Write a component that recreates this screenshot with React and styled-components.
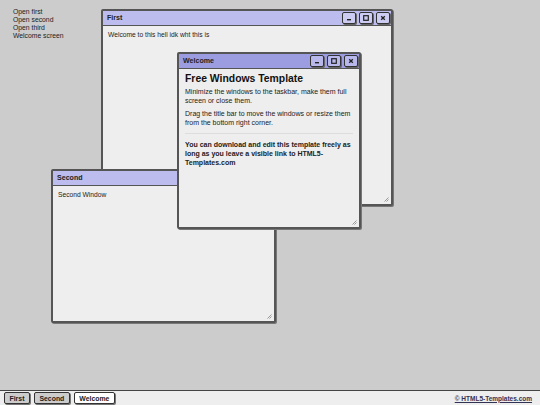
import React from "react";
import styled, { createGlobalStyle } from "styled-components";

const Global = createGlobalStyle`
  html, body { margin: 0; padding: 0; height: 100%; }
  body { background: #cccccc; font-family: "Liberation Sans", Arial, sans-serif; color: #222; }
  #root { height: 100%; }
`;

const Screen = styled.div`
  height: 100vh;
  display: flex;
  flex-direction: column;
  overflow: hidden;
`;

const Desktop = styled.div`
  position: relative;
  flex: 1;
`;

const Nav = styled.ul`
  list-style: none;
  margin: 0;
  padding: 8px 0 0 13px;
  font-size: 6.8px;
  line-height: 8px;
  color: #222;
`;

const NavItem = styled.li`
  cursor: pointer;
`;

const Win = styled.div`
  position: absolute;
  box-sizing: border-box;
  display: flex;
  flex-direction: column;
  background: #eeeeee;
  border: 2px solid #555;
  border-radius: 2px;
  box-shadow: 1px 1px 0 #777;
`;

const TitleBar = styled.div`
  display: flex;
  align-items: center;
  justify-content: space-between;
  height: 14px;
  padding: 0 1px 0 4px;
  background: ${(p) => (p.$active ? "#9c9ce0" : "#bcbcee")};
  border-bottom: 1px solid #555;
`;

const Title = styled.span`
  font-size: 7.1px;
  font-weight: bold;
  color: #222;
  margin-top: -1px;
`;

const Controls = styled.div`
  display: flex;
  gap: 3px;
`;

const CtrlBtn = styled.div`
  box-sizing: border-box;
  width: 14px;
  height: 12px;
  border: 1px solid #333;
  border-radius: 2px;
  background: ${(p) => (p.$active ? "#b8b8ec" : "#ccccf2")};
  display: flex;
  align-items: center;
  justify-content: center;
  box-shadow: 1px 1px 0 #666;
`;

const Body = styled.div`
  position: relative;
  flex: 1;
  padding: ${(p) => (p.$tight ? "3px 6px" : "4px 5px")};
  font-size: ${(p) => (p.$tight ? "7px" : "6.7px")};
  line-height: 9px;
`;

const Heading = styled.h2`
  margin: 0 0 1px;
  font-size: 10.4px;
  line-height: 14px;
  font-weight: bold;
  color: #111;
`;

const Para = styled.p`
  margin: 0 0 4px;
  font-weight: ${(p) => (p.$bold ? "bold" : "normal")};
`;

const Rule = styled.hr`
  border: 0;
  border-top: 1px solid #ddd;
  margin: 6px 0 6px;
`;

const Grip = styled.svg`
  position: absolute;
  right: 2px;
  bottom: 2px;
  width: 5px;
  height: 5px;
`;

const Taskbar = styled.div`
  height: 14px;
  border-top: 1px solid #444;
  background: #eeeeee;
  display: flex;
  align-items: center;
  padding: 0 4px;
  gap: 4px;
`;

const TaskBtn = styled.div`
  box-sizing: border-box;
  height: 12px;
  padding: 0 4.5px;
  border: 1px solid #333;
  border-radius: 2px;
  background: ${(p) => (p.$active ? "#ffffff" : "#cccccc")};
  box-shadow: 1px 1px 0 #777;
  font-size: 6.9px;
  font-weight: bold;
  display: flex;
  align-items: center;
`;

const Credit = styled.a`
  margin-left: auto;
  margin-right: 4px;
  font-size: 6.5px;
  font-weight: bold;
  color: #335;
  text-decoration: underline;
`;

const MinIcon = () => (
  <svg width="6" height="6" viewBox="0 0 6 6"><rect x="1" y="4" width="4" height="1.4" fill="#222" /></svg>
);
const MaxIcon = () => (
  <svg width="6" height="6" viewBox="0 0 6 6"><rect x="0.7" y="0.7" width="4.6" height="4.6" fill="none" stroke="#222" strokeWidth="1.2" /></svg>
);
const CloseIcon = () => (
  <svg width="6" height="6" viewBox="0 0 6 6"><path d="M1.2 1.2 L4.8 4.8 M4.8 1.2 L1.2 4.8" stroke="#222" strokeWidth="1.3" /></svg>
);

const ResizeGrip = () => (
  <Grip viewBox="0 0 5 5">
    <path d="M4.5 0.5 L0.5 4.5 M4.5 2.5 L2.5 4.5" stroke="#999" strokeWidth="1" />
  </Grip>
);

const Window = ({ title, active, tight, style, children }) => (
  <Win style={style}>
    <TitleBar $active={active}>
      <Title>{title}</Title>
      <Controls>
        <CtrlBtn $active={active}><MinIcon /></CtrlBtn>
        <CtrlBtn $active={active}><MaxIcon /></CtrlBtn>
        <CtrlBtn $active={active}><CloseIcon /></CtrlBtn>
      </Controls>
    </TitleBar>
    <Body $tight={tight}>
      {children}
      <ResizeGrip />
    </Body>
  </Win>
);

export default function App() {
  return (
    <Screen>
      <Global />
      <Desktop>
        <Nav>
          <NavItem>Open first</NavItem>
          <NavItem>Open second</NavItem>
          <NavItem>Open third</NavItem>
          <NavItem>Welcome screen</NavItem>
        </Nav>
        <Window title="First" style={{ left: 101, top: 9, width: 292, height: 197 }}>
          Welcome to this hell idk wht this is
        </Window>
        <Window title="Welcome" active tight style={{ left: 177, top: 52, width: 184, height: 177, zIndex: 3 }}>
          <Heading>Free Windows Template</Heading>
          <Para>Minimize the windows to the taskbar, make them full screen or close them.</Para>
          <Para>Drag the title bar to move the windows or resize them from the bottom right corner.</Para>
          <Rule />
          <Para $bold>You can download and edit this template freely as long as you leave a visible link to HTML5-Templates.com</Para>
        </Window>
        <Window title="Second" style={{ left: 51, top: 169, width: 225, height: 154, zIndex: 2 }}>
          Second Window
        </Window>
      </Desktop>
      <Taskbar>
        <TaskBtn>First</TaskBtn>
        <TaskBtn>Second</TaskBtn>
        <TaskBtn $active>Welcome</TaskBtn>
        <Credit href="#">© HTML5-Templates.com</Credit>
      </Taskbar>
    </Screen>
  );
}
